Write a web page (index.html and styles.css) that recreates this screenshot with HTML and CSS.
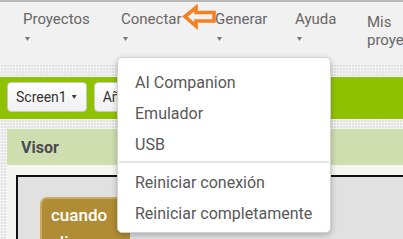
FILE: index.html
```html
<!DOCTYPE html>
<html lang="es">
<head>
<meta charset="utf-8">
<title>App Inventor</title>
<link rel="stylesheet" href="styles.css">
</head>
<body>
<div class="page">
  <header class="topbar">
    <div class="menu-item w-proyectos"><span class="menu-label">Proyectos</span><span class="caret"></span></div>
    <div class="menu-item w-conectar"><span class="menu-label">Conectar</span><span class="caret"></span></div>
    <div class="menu-item w-generar"><span class="menu-label">Generar</span><span class="caret"></span></div>
    <div class="menu-item w-ayuda"><span class="menu-label">Ayuda</span><span class="caret"></span></div>
    <div class="menu-item w-mis"><span class="menu-label">Mis proyectos</span></div>
  </header>

  <div class="texture band-top"></div>

  <div class="toolbar">
    <button class="tb-btn">Screen1 <span class="btn-caret"></span></button>
    <button class="tb-btn">Añadir ventana ...</button>
  </div>

  <div class="texture workspace">
    <section class="panel">
      <div class="panel-head">Visor</div>
      <div class="panel-body">
        <div class="canvas">
          <div class="block">
            <div class="block-line">cuando</div>
            <div class="block-line">clic</div>
          </div>
        </div>
      </div>
    </section>
  </div>

  <svg class="arrow" width="38" height="28" viewBox="0 0 38 28">
    <path d="M4 12.5 L15 3.5 L15 8.5 L33 8.5 L33 17 L15 17 L15 22 Z" fill="none" stroke="#f6801f" stroke-width="3.6" stroke-linejoin="miter"/>
  </svg>

  <nav class="dropdown">
    <div class="dd-item">AI Companion</div>
    <div class="dd-item">Emulador</div>
    <div class="dd-item">USB</div>
    <div class="dd-sep"></div>
    <div class="dd-item">Reiniciar conexión</div>
    <div class="dd-item">Reiniciar completamente</div>
  </nav>
</div>
</body>
</html>
```

FILE: styles.css
```css
html, body {
  margin: 0;
  padding: 0;
  overflow: hidden;
  width: 403px;
  height: 239px;
}

body {
  font-family: Roboto, "Noto Sans", "Liberation Sans", sans-serif;
  background: #e6e6e6;
}

.page {
  position: relative;
  width: 403px;
  height: 239px;
  overflow: hidden;
}

.topbar {
  display: flex;
  align-items: flex-start;
  box-sizing: border-box;
  height: 65px;
  border-top: 2px solid #b9b9b9;
  background: #f1f1f1;
  padding: 8px 0 0 23px;
}

.menu-item {
  display: flex;
  flex-direction: column;
  align-items: flex-start;
  flex: none;
  font-size: 15px;
  line-height: 18px;
  color: #676767;
}

.w-proyectos { width: 98px; }
.w-conectar { width: 94px; }
.w-generar { width: 80px; }
.w-ayuda { width: 72px; }
.w-mis { width: 70px; margin-top: 3px; }

.caret {
  display: block;
  width: 5px;
  height: 4px;
  margin: 9px 0 0 2px;
  background: #777;
  clip-path: polygon(0 0, 100% 0, 50% 100%);
}

.texture {
  background-color: #e3e3e3;
  background-image:
    repeating-linear-gradient(0deg, rgba(255, 255, 255, 0.55) 0 1px, transparent 1px 3px),
    repeating-linear-gradient(90deg, rgba(255, 255, 255, 0.45) 0 1px, transparent 1px 3px);
}

.band-top {
  height: 12px;
}

.toolbar {
  display: flex;
  gap: 7px;
  box-sizing: border-box;
  height: 42px;
  background: #8fc202;
  padding: 5px 0 0 7px;
}

.tb-btn {
  display: flex;
  align-items: center;
  gap: 5px;
  flex: none;
  height: 30px;
  margin: 0;
  padding: 0 9px 0 8px;
  border: 1px solid #c8c8c8;
  border-radius: 4px;
  background: linear-gradient(#ffffff, #f0f0f0);
  font-family: Roboto, "Noto Sans", "Liberation Sans", sans-serif;
  font-size: 14px;
  color: #333;
}

.btn-caret {
  display: block;
  width: 5px;
  height: 4px;
  background: #444;
  clip-path: polygon(0 0, 100% 0, 50% 100%);
}

.workspace {
  padding: 10px 0 0 7px;
  height: 120px;
}

.panel {
  display: flex;
  flex-direction: column;
}

.panel-head {
  box-sizing: border-box;
  height: 36px;
  padding: 9px 0 0 14px;
  background: #cfdeaf;
  font-size: 16px;
  line-height: 19px;
  font-weight: bold;
  color: #4a4a52;
}

.panel-body {
  background: #f6f6f1;
  padding: 10px 0 0 9px;
  height: 100px;
}

.canvas {
  border-top: 2px solid #111;
  border-left: 2px solid #111;
  background: #e1e1e1;
  height: 100px;
  padding: 20px 0 0 22px;
}

.block {
  box-sizing: border-box;
  width: 90px;
  height: 60px;
  background: #b08c35;
  border-top: 2px solid #c9aa62;
  border-left: 2px solid #c9aa62;
  border-radius: 7px 7px 0 0;
  padding: 3px 0 0 9px;
  color: #ffffff;
  font-size: 17px;
  font-weight: 500;
  line-height: 27px;
}

.arrow {
  position: absolute;
  left: 181px;
  top: 4px;
}

.dropdown {
  position: absolute;
  left: 117px;
  top: 57px;
  box-sizing: border-box;
  width: 214px;
  height: 176px;
  padding: 9px 0 0 0;
  background: #ffffff;
  border: 1px solid #d2d2d2;
  border-radius: 5px;
  box-shadow: 0 2px 6px rgba(0, 0, 0, 0.25);
}

.dd-item {
  height: 31px;
  line-height: 31px;
  padding-left: 17px;
  font-size: 16px;
  color: #585858;
  white-space: nowrap;
}

.dd-sep {
  height: 2px;
  margin: 1px 1px 4px 1px;
  background: #e4e4e4;
}
```
